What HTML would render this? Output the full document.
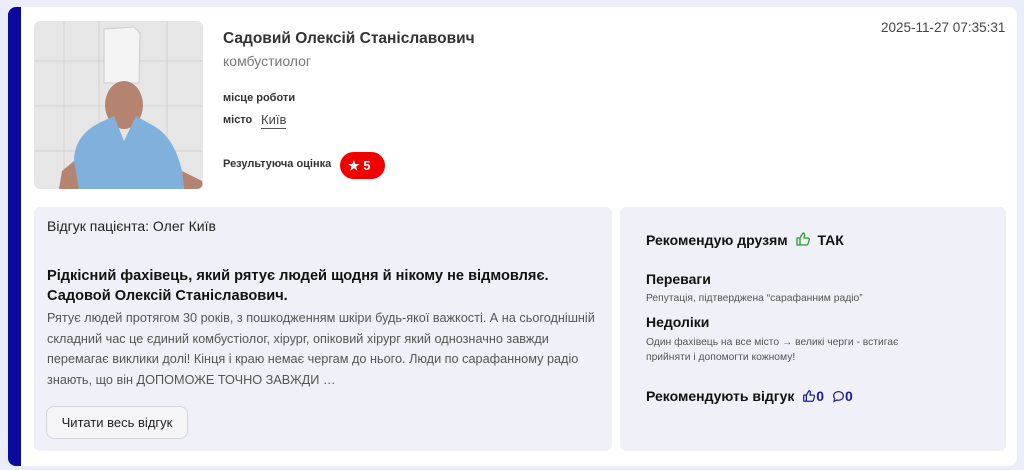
<!DOCTYPE html>
<html><head><meta charset="utf-8"><style>
*{margin:0;padding:0;box-sizing:border-box}
body{width:1024px;height:470px;background:#ecedfb;font-family:"Liberation Sans",Arial,sans-serif;color:#222;position:relative;overflow:hidden}
.card{position:absolute;left:8px;top:7px;width:1009px;height:459px;background:#fff;border-radius:8px;border-left:13px solid #0a0a9e}
.photo{position:absolute;left:34px;top:21px;width:169px;height:168px;border-radius:6px;overflow:hidden}
.abs{position:absolute;white-space:nowrap}
.panel{position:absolute;top:207px;height:244px;background:#f0f1f8;border-radius:6px}
.btn{position:absolute;left:46px;top:406px;width:142px;height:33px;border:1px solid #d4d4dc;border-radius:8px;background:#f5f5f8;font-size:13px;line-height:31px;text-align:center;color:#222}
.p{font-size:12.7px;color:#555;line-height:20.5px}
</style></head><body>
<div class="card"></div>
<div class="photo">
<svg width="169" height="168" viewBox="0 0 169 168">
<rect x="0" y="0" width="169" height="168" fill="#e6e6e6"/>
<g stroke="#d2d2d2" stroke-width="1"><line x1="30" y1="0" x2="30" y2="168"/><line x1="65" y1="0" x2="65" y2="168"/><line x1="133" y1="0" x2="133" y2="168"/><line x1="0" y1="40" x2="169" y2="40"/><line x1="0" y1="85" x2="169" y2="85"/><line x1="0" y1="130" x2="169" y2="130"/></g>
<path d="M70 8 L100 6 L106 12 L105 62 L70 62 Z" fill="#f4f4f4" stroke="#ccc"/>
<ellipse cx="90" cy="84" rx="19" ry="24" fill="#b58470"/>
<path d="M40 168 L40 140 Q40 115 65 102 L80 95 L90 120 L102 95 L118 104 Q140 115 148 150 L150 168 Z" fill="#7fb1dc"/>
<path d="M40 140 L28 150 L25 168 L45 168 Z" fill="#b58470"/>
<path d="M148 150 L168 160 L169 168 L150 168 Z" fill="#b58470"/>
</svg></div>
<div class="abs" style="left:223px;top:30px;font-size:15.5px;font-weight:bold;color:#333">Садовий Олексій Станіславович</div>
<div class="abs" style="left:223px;top:53px;font-size:14px;color:#777">комбустиолог</div>
<div class="abs" style="left:223px;top:92px;font-size:11px;font-weight:bold;color:#333">місце роботи</div>
<div class="abs" style="left:223px;top:114px;font-size:11px;font-weight:bold;color:#333">місто</div>
<div class="abs" style="left:261px;top:112px;font-size:13px;color:#444;border-bottom:1px solid #555;line-height:16px">Київ</div>
<div class="abs" style="left:223px;top:158px;font-size:11px;font-weight:bold;color:#333">Результуюча оцінка</div>
<div class="abs" style="left:340px;top:152px;width:45px;height:27px;border-radius:14px;background:#f10000;color:#fff;font-weight:bold;font-size:13px;line-height:27px;padding-left:8px">★ 5</div>
<div class="abs" style="left:881px;top:20px;font-size:13.5px;color:#444">2025-11-27 07:35:31</div>

<div class="panel" style="left:34px;width:578px"></div>
<div class="panel" style="left:620px;width:386px"></div>
<div class="abs" style="left:47px;top:218px;font-size:14px;color:#222">Відгук пацієнта: Олег Київ</div>
<div class="abs" style="left:47px;top:266px;font-size:14.6px;font-weight:bold;color:#111;line-height:20px;white-space:normal;width:560px">Рідкісний фахівець, який рятує людей щодня й нікому не відмовляє. Садовой Олексій Станіславович.</div>
<div class="abs p" style="left:47px;top:308px;white-space:normal;width:560px">Рятує людей протягом 30 років, з пошкодженням шкіри будь-якої важкості. А на сьогоднішній складний час це єдиний комбустіолог, хірург, опіковий хірург який однозначно завжди перемагає виклики долі! Кінця і краю немає чергам до нього. Люди по сарафанному радіо знають, що він ДОПОМОЖЕ ТОЧНО ЗАВЖДИ …</div>
<div class="btn">Читати весь відгук</div>

<div class="abs" style="left:646px;top:231px;font-size:14px;font-weight:bold;color:#111">Рекомендую друзям
<svg width="16" height="16" viewBox="0 0 16 16" style="vertical-align:-2px;margin:0 6px 0 4px"><path d="M2 7h3v7H2zM5 7l3-5c1 0 2 1 1.5 3L9 7h4c1 0 1.5 1 1.2 2l-1.2 4c-.3.7-.8 1-1.5 1H5" fill="none" stroke="#2a9a2a" stroke-width="1.3" stroke-linejoin="round"/></svg>ТАК</div>
<div class="abs" style="left:646px;top:271px;font-size:14px;font-weight:bold;color:#111">Переваги</div>
<div class="abs" style="left:646px;top:293px;font-size:10.3px;color:#555">Репутація, підтверджена “сарафанним радіо”</div>
<div class="abs" style="left:646px;top:314px;font-size:14px;font-weight:bold;color:#111">Недоліки</div>
<div class="abs" style="left:646px;top:335px;font-size:10.3px;color:#555;line-height:15px">Один фахівець на все місто → великі черги - встигає<br>прийняти і допомогти кожному!</div>
<div class="abs" style="left:646px;top:388px;font-size:14px;font-weight:bold;color:#111">Рекомендують відгук
<span style="color:#1a1aa0"><svg width="14" height="14" viewBox="0 0 16 16" style="vertical-align:-2px;margin-left:4px"><path d="M2 7h3v7H2zM5 7l3-5c1 0 2 1 1.5 3L9 7h4c1 0 1.5 1 1.2 2l-1.2 4c-.3.7-.8 1-1.5 1H5" fill="none" stroke="#1a1aa0" stroke-width="1.4" stroke-linejoin="round"/></svg>0
<svg width="13" height="13" viewBox="0 0 16 16" style="vertical-align:-2px;margin-left:4px"><path d="M8 2C4.5 2 2 4.3 2 7.2c0 1.3.5 2.4 1.3 3.3L2.5 14l3.6-1.7c.6.2 1.2.3 1.9.3 3.5 0 6-2.3 6-5.3S11.5 2 8 2z" fill="none" stroke="#1a1aa0" stroke-width="1.5"/></svg>0</span></div>
</body></html>
